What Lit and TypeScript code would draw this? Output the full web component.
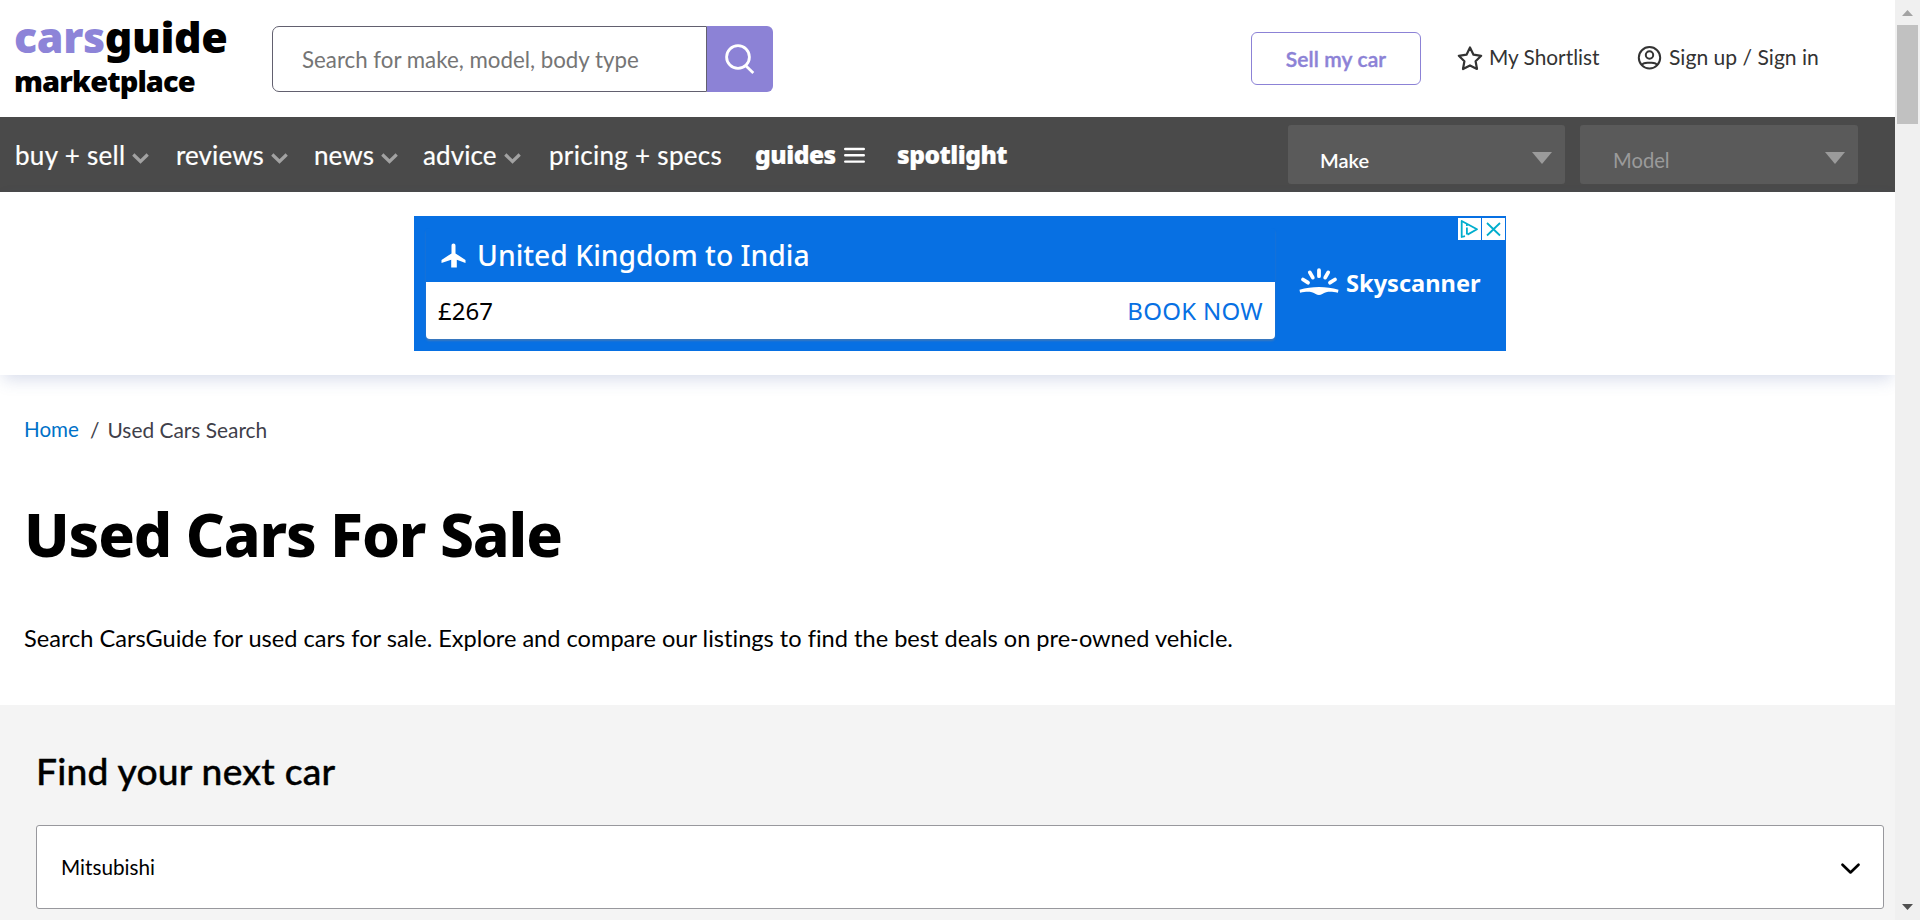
import { LitElement, html, css, svg, nothing } from "lit";
import { customElement } from "lit/decorators.js";

const shared = css`
  :host { display: block; }
  * { box-sizing: border-box; }
  svg { display: block; flex: none; }
`;

@customElement("site-header")
class SiteHeader extends LitElement {
  static styles = [shared, css`
    .bar { display: flex; height: 117px; background: #fff; padding-left: 14px; }
    .logo { width: 258px; padding-top: 12px; font-family: "Noto Sans", sans-serif; font-weight: 900; color: #000; white-space: nowrap; }
    .brand { font-size: 43px; line-height: 50px; letter-spacing: -0.4px; }
    .brand em { font-style: normal; color: #8d84d8; }
    .sub { font-size: 29px; line-height: 38px; letter-spacing: -0.9px; }
    .search { display: flex; width: 501px; height: 66px; margin-top: 26px; }
    .field { flex: 1; border: 1px solid #62606f; border-radius: 7px 0 0 7px; padding-left: 29px; line-height: 66px; font-size: 22.3px; color: #757575; }
    .go { width: 66px; background: #8c82d6; border-radius: 0 6px 6px 0; padding: 17px 0 0 18px; }
    .sell { margin: 32px 0 0 478px; width: 170px; height: 53px; border: 1px solid #8c82d6; border-radius: 6px; text-align: center; font-size: 21px; font-weight: 600; line-height: 52px; color: #8c82d6; letter-spacing: 0.1px; -webkit-text-stroke: 0.4px #8c82d6; }
    .link { display: flex; margin-top: 46px; height: 26px; color: #333; font-size: 20.8px; line-height: 22px; white-space: nowrap; }
    .short { margin-left: 36px; gap: 6px; width: 180px; }
    .user { gap: 7px; font-size: 21.1px; }
  `];
  render() {
    return html`<header class="bar">
      <div class="logo"><div class="brand"><em>cars</em>guide</div><div class="sub">marketplace</div></div>
      <div class="search">
        <div class="field">Search for make, model, body type</div>
        <div class="go"><svg width="30" height="32" viewBox="0 0 30 32" fill="none" stroke="#fff" stroke-width="2.8"><circle cx="13" cy="14" r="11.4"/><path d="M20.3 22.3 28.3 30"/></svg></div>
      </div>
      <div class="sell">Sell my car</div>
      <div class="link short">
        <svg width="26" height="25" viewBox="0 0 26 25" fill="none" stroke="#333" stroke-width="2.2" stroke-linejoin="round"><path d="M13 1.500 16.500 8.700 24.200 9.800 18.600 15.200 20 23 13 19.400 6 23 7.400 15.200 1.800 9.800 9.500 8.700Z"/></svg>
        <span>My Shortlist</span>
      </div>
      <div class="link user">
        <svg width="25" height="25" viewBox="0 0 25 25" fill="none" stroke="#333" stroke-width="2"><circle cx="12.500" cy="11.800" r="10.700"/><circle cx="12.500" cy="9" r="3.700"/><path d="M5 19.200c1-3 4-2.400 7.500-2.400s6.500-.6 7.500 2.400"/></svg>
        <span>Sign up / Sign in</span>
      </div>
    </header>`;
  }
}

const chevron = svg`<svg width="17" height="11" viewBox="0 0 17 11" fill="none" stroke="#a2a2a2" stroke-width="3.2"><path d="M1.300 1.500 8.500 8.500 15.700 1.500"/></svg>`;
const burger = svg`<svg width="21" height="17" viewBox="0 0 21 17" stroke="#fff" stroke-width="2.4" stroke-linecap="round"><path d="M1.200 2h18.600M1.200 8.200h18.600M1.200 14.600h18.600"/></svg>`;

@customElement("site-nav")
class SiteNav extends LitElement {
  static styles = [shared, css`
    .nav { display: flex; align-items: center; height: 75px; background: #4a4a4a; color: #fff; padding: 0 37px 0 15px; }
    .items { flex: 1; display: grid; grid-template-columns: 161px 138px 109px 126px 206px 142px auto; align-items: center; }
    .item { display: flex; align-items: center; gap: 7px; font-size: 26px; line-height: 40px; letter-spacing: 0.1px; white-space: nowrap; -webkit-text-stroke: 0.2px #fff; }
    .item.wide { letter-spacing: 0.3px; }
    .item svg { margin-top: 7px; }
    .item.heavy { font-family: "Noto Sans", sans-serif; font-weight: 900; font-size: 24.5px; letter-spacing: -0.5px; padding-top: 1px; }
    .heavy svg { margin: 0 0 0 1px; }
    .pick { display: flex; justify-content: space-between; width: 278px; height: 59px; margin-left: 14px; padding: 11px 13px 0 33px; background: #5a5a5a; border-radius: 3px; font-size: 20.2px; }
    .pick span { line-height: 48px; }
    .make { width: 277px; margin-right: 1px; padding-left: 32px; font-weight: 600; font-size: 20px; }
    .model { color: #9b9b9b; }
    .pick svg { margin-top: 16px; }
  `];
  render() {
    const items = [["buy + sell", 1], ["reviews", 1], ["news", 1], ["advice", 1], ["pricing + specs", 0], ["guides", 2], ["spotlight", 3]] as [string, number][];
    const arrow = html`<svg width="20" height="12" viewBox="0 0 20 12"><path d="M0 0h20L10 12Z" fill="#9b9b9b"/></svg>`;
    return html`<nav class="nav">
      <div class="items">${items.map(([label, kind]) => html`<div class="item ${kind > 1 ? "heavy" : label.includes("+") ? "wide" : ""}"><span>${label}</span>${kind === 1 ? chevron : kind === 2 ? burger : nothing}</div>`)}</div>
      <div class="pick make"><span>Make</span>${arrow}</div>
      <div class="pick model"><span>Model</span>${arrow}</div>
    </nav>`;
  }
}

@customElement("flight-ad")
class FlightAd extends LitElement {
  static styles = [shared, css`
    .slot { height: 183px; padding-top: 24px; background: #fff; box-shadow: 0 7px 16px -3px rgba(70, 90, 160, 0.22); position: relative; }
    .ad { position: relative; display: flex; width: 1092px; height: 135px; margin-left: 414px; padding: 12px 0 0 12px; background: #0770e3; font-family: "Noto Sans", sans-serif; }
    .card { width: 849px; height: 111px; border-radius: 4px; overflow: hidden; box-shadow: 0 2px 2px #3a78bd; background: #0770e3; }
    .title { display: flex; align-items: center; height: 54px; gap: 11px; padding-left: 15px; font-size: 28.300px; font-weight: 500; color: #fff; }
    .offer { display: flex; justify-content: space-between; height: 57px; padding: 0 12px 0 12px; background: #fff; font-size: 24px; line-height: 58px; color: #000; }
    .book { color: #0770e3; letter-spacing: 0.300px; }
    .sky { display: flex; gap: 7px; height: 40px; margin: 34px 0 0 24px; font-weight: 700; font-size: 23.600px; line-height: 42px; color: #fff; }
    .sky svg { margin-top: 6px; }
    .badges { position: absolute; top: 2px; right: 1px; display: flex; gap: 1px; }
    .badges svg { background: #fff; }
  `];
  render() {
    return html`<div class="slot"><div class="ad">
      <div class="card">
        <div class="title">
          <svg width="25" height="25" viewBox="0 0 25 25" fill="#fff"><path d="M12.500 0.500c1.200 0 2 .9 2 2.200v7.700L24.500 17v3.100l-8.700-3.300v7.700h-5.600v-7.700l-9.700 3.300V17l10-6.600V2.700c0-1.300.8-2.200 2-2.200Z"/></svg>
          <span>United Kingdom to India</span>
        </div>
        <div class="offer"><span>£267</span><span class="book">BOOK NOW</span></div>
      </div>
      <div class="sky">
        <svg width="40" height="27" viewBox="0 0 40 27" fill="none" stroke="#fff" stroke-width="3.800" stroke-linecap="round"><path d="M20 2.200v6M10.800 4.400l3 5.200M29.200 4.400l-3 5.200M4 11.500l5 3.200M36 11.500l-5 3.200"/><path d="M.5 21.800C13 18 27 18 39.500 21.800l-.6 3c-5-1.200-8.400-1.400-11.800-.6-2.900.8-4.800 2.800-7.100 2.800s-4.200-2-7.100-2.800c-3.400-.8-6.800-.6-11.800.6Z" fill="#fff" stroke="none"/></svg>
        <span>Skyscanner</span>
      </div>
      <div class="badges">
        <svg width="23" height="22" viewBox="0 0 23 22" fill="none" stroke="#00aecd" stroke-width="1.800" stroke-linejoin="round"><path d="M7 18.200 3.700 19V3L19 11.200 9.500 16.600M8.900 9.500v7"/><path d="M8.900 6v2"/></svg>
        <svg width="23" height="22" viewBox="0 0 23 22" fill="none" stroke="#00aecd" stroke-width="1.800"><path d="M5 5 18 17.500M18 5 5 17.500"/></svg>
      </div>
    </div></div>`;
  }
}

@customElement("page-content")
class PageContent extends LitElement {
  static styles = [shared, css`
    .intro { height: 330px; padding: 40px 24px 0; background: #fff; color: #000; }
    .crumbs { display: flex; height: 30px; line-height: 29px; font-size: 20.900px; color: #3f3f4a; }
    .home { color: #0071c8; width: 66px; font-size: 20.600px; }
    .sep { width: 17.500px; }
    .title { margin: 49px 0 0; font-family: "Noto Sans", sans-serif; font-weight: 800; font-size: 60.500px; letter-spacing: -1.150px; line-height: 80px; }
    .lead { margin: 50px 0 0; font-size: 23.600px; line-height: 28px; }
    .find { height: 215px; padding: 45px 11px 0 36px; background: #f4f4f4; }
    .sub { margin: 0; font-size: 37.200px; font-weight: 500; letter-spacing: 0.250px; line-height: 42px; -webkit-text-stroke: 0.4px #000; }
    .select { display: flex; justify-content: space-between; align-items: center; height: 84px; margin-top: 33px; padding: 0 23px 0 24px; border: 1px solid #98989d; border-radius: 3px; background: #fff; font-size: 20.700px; }
    .select svg { margin-top: 3px; }
  `];
  render() {
    return html`
      <section class="intro">
        <div class="crumbs"><span class="home">Home</span><span class="sep">/</span><span>Used Cars Search</span></div>
        <h1 class="title">Used Cars For Sale</h1>
        <p class="lead">Search CarsGuide for used cars for sale. Explore and compare our listings to find the best deals on pre-owned vehicle.</p>
      </section>
      <section class="find">
        <h2 class="sub">Find your next car</h2>
        <div class="select"><span>Mitsubishi</span><svg width="19" height="12" viewBox="0 0 19 12" fill="none" stroke="#000" stroke-width="2.600" stroke-linecap="round" stroke-linejoin="round"><path d="M1.500 1.700 9.500 9.500 17.500 1.700"/></svg></div>
      </section>`;
  }
}

@customElement("app-root")
class AppRoot extends LitElement {
  static styles = [shared, css`
    .window { display: flex; width: 1920px; height: 920px; overflow: hidden; background: #fff; font-family: Lato, "Noto Sans", sans-serif; font-variant-ligatures: none; }
    .page { width: 1895px; overflow: hidden; }
    .track { display: flex; flex-direction: column; align-items: center; width: 25px; padding: 10px 0; background: #f0f0f0; }
    .thumb { width: 21px; height: 99px; margin: 9px 0 auto; background: #c1c1c1; }
    .ad { position: relative; }
  `];
  render() {
    return html`<div class="window">
      <main class="page">
        <site-header></site-header>
        <site-nav></site-nav>
        <flight-ad class="ad"></flight-ad>
        <page-content></page-content>
      </main>
      <div class="track">
        <svg width="11" height="6" viewBox="0 0 11 6"><path d="M0 6 5.500 0 11 6Z" fill="#a3a3a3"/></svg>
        <div class="thumb"></div>
        <svg width="11" height="6" viewBox="0 0 11 6"><path d="M0 0h11L5.500 6Z" fill="#505050"/></svg>
      </div>
    </div>`;
  }
}
